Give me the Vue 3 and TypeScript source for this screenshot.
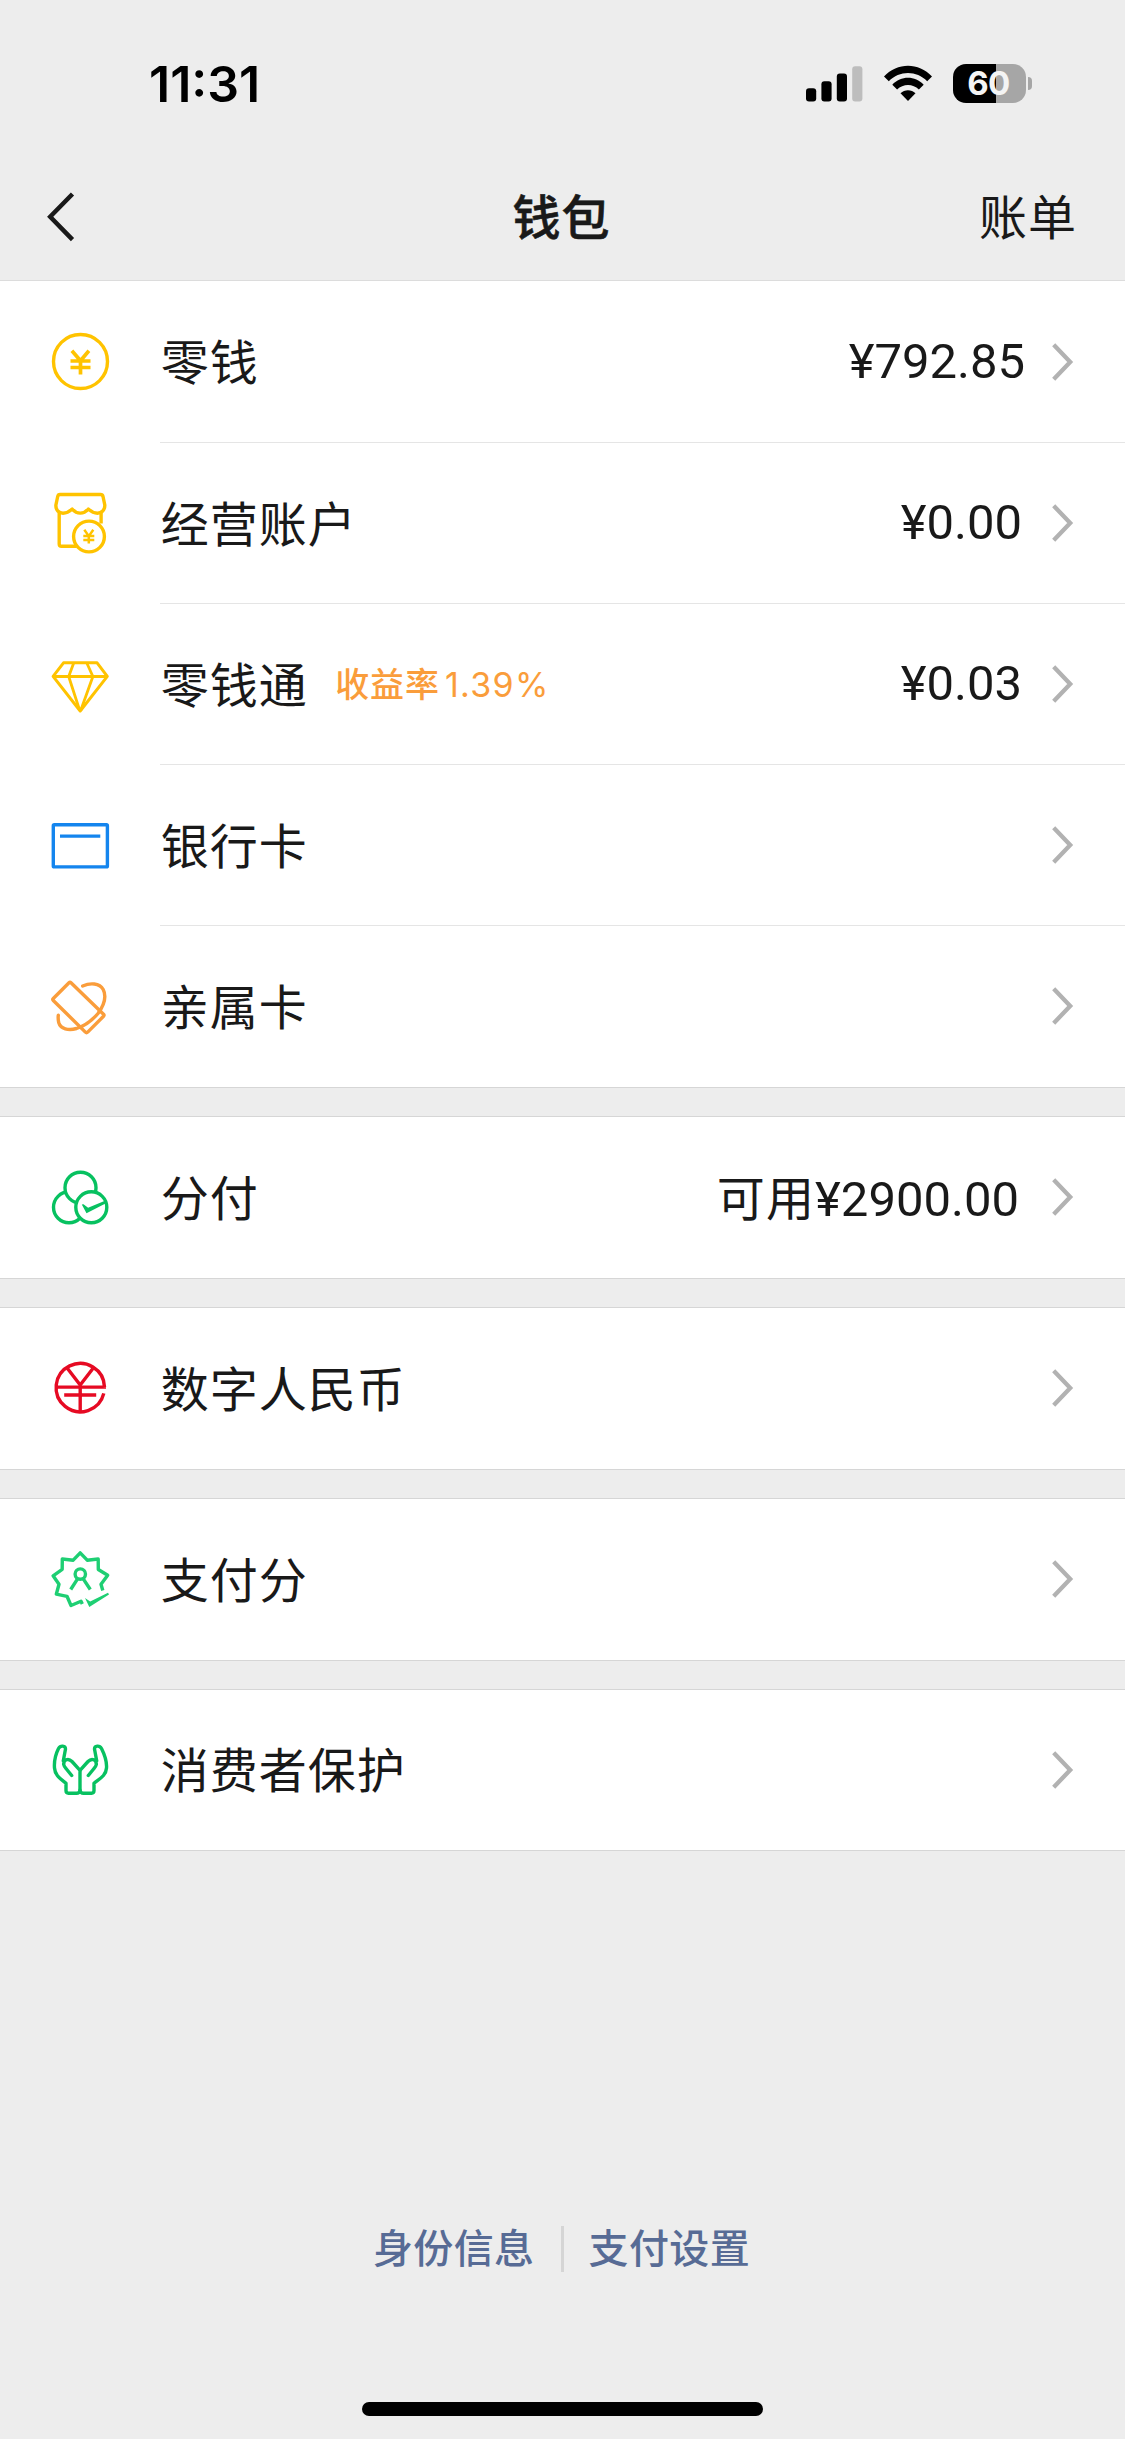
<script setup lang="ts">
type IconName = 'coin' | 'store' | 'diamond' | 'card' | 'kin' | 'installment' | 'ecny' | 'score' | 'hands'

interface WalletItem {
  label: string
  icon: IconName
  tag?: string
  prefix?: string
  amount?: string
  inset?: number
}

const groups: WalletItem[][] = [
  [
    { label: '零钱', icon: 'coin', amount: '¥792.85', inset: 0 },
    { label: '经营账户', icon: 'store', amount: '¥0.00', inset: 3 },
    { label: '零钱通', icon: 'diamond', tag: '收益率', amount: '¥0.03', inset: 3 },
    { label: '银行卡', icon: 'card' },
    { label: '亲属卡', icon: 'kin' },
  ],
  [{ label: '分付', icon: 'installment', prefix: '可用', amount: '¥2900.00', inset: 6 }],
  [{ label: '数字人民币', icon: 'ecny' }],
  [{ label: '支付分', icon: 'score' }],
  [{ label: '消费者保护', icon: 'hands' }],
]

const rate = '1.39%'
</script>

<template>
  <div class="screen">
    <header class="top">
      <div class="status">
        <span class="time">11:31</span>
        <div class="indicators">
          <svg class="signal" width="57" height="36" viewBox="0 0 57 36">
            <rect x="0" y="22.2" width="10.2" height="13.3" rx="3" />
            <rect x="15.4" y="15.2" width="10.2" height="20.3" rx="3" />
            <rect x="30.8" y="7.4" width="10.2" height="28.1" rx="3" />
            <rect x="46.2" y="0.2" width="10.2" height="35.3" rx="3" fill="#bdbdbd" />
          </svg>
          <svg class="wifi" width="50" height="37" viewBox="0 0 50 37">
            <path d="M1 11.4C14.3-2.8 35.7-2.8 49 11.4L44.2 16.3C33.6 5.2 16.4 5.2 5.800 16.300Z" />
            <path d="M9.300 19.700C18 10.500 32 10.500 40.700 19.700L35.900 24.600C29.900 18.400 20.100 18.400 14.100 24.600Z" />
            <path d="M17.500 28.200C21.700 24.200 28.300 24.200 32.500 28.200L25 36Z" />
          </svg>
          <div class="battery"><span>60</span></div>
          <i class="battery-cap"></i>
        </div>
      </div>
      <nav class="nav">
        <svg class="back" width="30" height="50" viewBox="0 0 30 50">
          <path d="M26.500 2L4.200 24.800L26.500 47.600" />
        </svg>
        <h1>钱包</h1>
        <a class="bill">账单</a>
      </nav>
    </header>

    <main>
      <section v-for="(group, g) in groups" :key="g" class="group">
        <div v-for="item in group" :key="item.label" class="row">
          <svg class="icon" :class="item.icon" viewBox="-36.500 -36.500 73 73" width="73" height="73">
            <template v-if="item.icon === 'coin'">
              <circle r="27" cx="0" cy="0" />
              <path stroke-width="3.700" d="M-8.600-10.800L0-.8L8.400-10.800M0-.8V13M-10-.5H10M-10 6H10" />
            </template>
            <template v-else-if="item.icon === 'store'">
              <path d="M-21.300-11V20.500Q-21.300 22.700-19 22.700H-4M20.600-11V0" />
              <path d="M-20.500-29H20Q22-29 22.500-27L24.300-18.500C24.500-13.500 21-10.300 17-10.300C13-10.300 10.500-12 7.800-14.400C3-9-3.500-9-8.300-14.400C-11-12-13.500-10.300-17.500-10.300C-21.500-10.300-25-13.500-24.600-18.500L-22.800-27Q-22.400-29-20.500-29Z" />
              <circle cx="8.500" cy="13" r="15.400" fill="#fff" />
              <path stroke-width="2.500" d="M3.800 6.200L8.300 12.600L12.800 6.200M8.300 12.600V20M2.800 12.500H13.800M2.800 16.400H13.800" />
            </template>
            <template v-else-if="item.icon === 'diamond'">
              <path stroke-width="3" d="M-17-21.700H16.600L26.800-8.200L-.3 26.500L-27.400-8.200Z" />
              <path stroke-width="2.800" d="M-27-8H26.500M-6.800-21.500L-11.800-8L-.8 26M6.300-21.500L12.400-8L.2 26" />
            </template>
            <template v-else-if="item.icon === 'card'">
              <rect x="-27.200" y="-20.700" width="54.100" height="42.100" rx="1" />
              <path d="M-20.500-9.400H19.800" />
            </template>
            <template v-else-if="item.icon === 'kin'">
              <path d="M-11.500-23.700Q-10.500-24.700-9.500-23.700L23 7.700Q24 8.800 23 9.800L7.200 25.600Q6 26.700 4.900 25.600L-27.200-6Q-28.200-7-27.200-8Z" />
              <path stroke-linecap="round" d="M2.200-20.500C9.500-23.800 19-23.700 22.700-17C26.500-9.500 22.500 0 17.500 7C11 14.500 3 19.800-4 22C-12 24.300-20 22.500-21.800 16C-22.400 13.500-22.500 11.500-22.200 8.800" />
            </template>
            <template v-else-if="item.icon === 'installment'">
              <circle cx="-11.500" cy="9.800" r="15.500" />
              <circle cx="0" cy="-9.800" r="15.500" fill="#fff" />
              <circle cx="10.800" cy="9.800" r="15.500" fill="#fff" />
              <path class="solid" d="M1.300 7L3 6.800L7.600 10.300L24.500 3.200L25.500 5.700L6 15.800Z" />
            </template>
            <template v-else-if="item.icon === 'ecny'">
              <path d="M25.500-1.400H-24.500M24-1.400A24.200 24.200 0 1 0 23.300 4.900" />
              <path d="M-13-20L-.3-3.500L12.400-20M-.3-3.500V24M-16.300 6.500H15.700" />
            </template>
            <template v-else-if="item.icon === 'score'">
              <path d="M22.300 11L20.500 4.700L27.200-4.200L17.800-10L17.700-20.500L6.700-19.300L-.3-26.700L-7.300-19.300L-18.200-20.500L-18.300-10.200L-27.400-3.700L-21.500 4.700L-24.200 14.700L-13.500 16.800L-9.500 26L.5 21.800L1.800 24.500" />
              <circle cx="-.2" cy="-5.400" r="5.200" />
              <path d="M-2.800-.9L-9.800 10M2.600-.9L9.800 10" />
              <path class="solid" d="M4.500 18.600L9.700 22L27.500 13.300L28.500 15L8.800 27.500Z" />
            </template>
            <template v-else>
              <path stroke-linecap="round" d="M-.5 .8V22.500M-.5 .8L-8.500-8C-12.500-12-17-9.500-16.800-5C-16.500-3.500-15.500-2-14.500-1L-8.800 6M-17.200-8.800L-15-20.500C-15-24-20-24.500-22-21C-25.500-14-26.500-8-26-1.500C-25.500 6.500-19.500 9.500-14.500 13.700V21C-14.500 22.800-13.500 23.700-12 23.700H-4C-2 23.700-.5 22.500-.5 20.500" />
              <path stroke-linecap="round" d="M-.5 .8L7.500-8C11.500-12 16-9.500 15.800-5C15.500-3.500 14.500-2 13.500-1L7.800 6M16.200-8.800L14-20.500C14-24 19-24.500 21-21C24.500-14 26.500-8 26-1.500C25.500 6.500 18.500 9.500 13.500 13.700V21C13.500 22.800 12.500 23.700 11 23.700H3C1 23.700-.5 22.500-.5 20.500" />
            </template>
          </svg>
          <span class="label">{{ item.label }}</span>
          <span v-if="item.tag" class="tag">{{ item.tag }}<b>{{ rate }}</b></span>
          <span v-if="item.amount" class="value" :style="{ marginRight: item.inset + 'px' }">
            <em v-if="item.prefix">{{ item.prefix }}</em>{{ item.amount }}
          </span>
          <svg class="chevron" width="24" height="40" viewBox="0 0 24 40">
            <path d="M2.700 2.800L19.200 20L2.700 37.200" />
          </svg>
        </div>
      </section>
    </main>

    <footer class="footer">
      <a>身份信息</a>
      <i class="divider"></i>
      <a>支付设置</a>
    </footer>
    <div class="home"></div>
  </div>
</template>

<style>
body {
  margin: 0;
  background: #ededed;
}
</style>

<style scoped>
.screen {
  width: 1125px;
  height: 2439px;
  display: flex;
  flex-direction: column;
  background: #ededed;
  color: #191919;
  font-family: "Noto Sans CJK SC", sans-serif;
  overflow: hidden;
}
.top {
  height: 281px;
  box-sizing: border-box;
  border-bottom: 1px solid #dcdcdc;
}
.status {
  height: 154px;
  display: flex;
  justify-content: space-between;
  padding: 0 93px 0 149px;
}
.time {
  margin-top: 54px;
  height: 60px;
  font: 600 50px/60px Inter, sans-serif;
  color: #000;
}
.indicators {
  display: flex;
  align-items: center;
  height: 39px;
  margin-top: 64px;
}
.wifi {
  margin: 0 20px;
}
.battery {
  width: 73px;
  height: 39px;
  border-radius: 13px;
  background: linear-gradient(90deg, #000 43px, #a6a6a6 43px);
  color: #f4f4f4;
  text-align: center;
  font: 700 33px/39px Inter, sans-serif;
  letter-spacing: -0.600px;
  text-indent: -2px;
}
.battery-cap {
  width: 4px;
  height: 13px;
  margin-left: 2px;
  border-radius: 0 5px 5px 0;
  background: #a6a6a6;
}
.nav {
  height: 126px;
  display: grid;
  grid-template-columns: 1fr auto 1fr;
  align-items: center;
  padding: 0 48px 0 46px;
}
.back,
.chevron {
  fill: none;
  stroke: #191919;
  stroke-width: 4.500;
}
h1,
.bill {
  margin: 0;
  padding-bottom: 6px;
  font-size: 48px;
  line-height: 72px;
  letter-spacing: 1px;
}
h1 {
  font-weight: 500;
  -webkit-text-stroke: 0.600px currentColor;
}
.bill {
  justify-self: end;
}
.group {
  background: #fff;
  border-bottom: 1px solid #d6d6d6;
}
.group + .group {
  margin-top: 28px;
  border-top: 1px solid #d6d6d6;
}
.row {
  height: 161px;
  display: flex;
  align-items: center;
  padding: 0 50px 1px 44px;
  box-sizing: border-box;
  background: linear-gradient(#e5e5e5, #e5e5e5) 160px 100% / 100% 1px no-repeat;
}
.row:first-child:not(:last-child) {
  height: 162px;
}
.row:last-child {
  background: none;
}
.group:last-child .row {
  height: 160px;
}
.icon {
  flex: none;
  fill: none;
  stroke: currentColor;
  stroke-width: 3.400;
  stroke-linejoin: round;
}
.coin,
.store,
.diamond {
  color: #ffc300;
}
.card {
  color: #1485ee;
}
.kin {
  color: #fa9d3b;
}
.installment,
.hands {
  color: #07c160;
}
.ecny {
  color: #e60a23;
}
.score {
  color: #1ecf73;
}
.solid {
  fill: currentColor;
  stroke: none;
}
.label {
  margin-left: 43.700px;
  padding-bottom: 5px;
  font-size: 48px;
  line-height: 72px;
  letter-spacing: 1px;
}
.tag {
  margin-left: 27.500px;
  padding-bottom: 1px;
  font-size: 34px;
  line-height: 50px;
  font-weight: 500;
  letter-spacing: 0.900px;
  color: #fa9d3b;
}
.tag b {
  margin-left: 5px;
  font-family: Inter, sans-serif;
  font-weight: 400;
  letter-spacing: 1.300px;
}
.value {
  margin-left: auto;
  display: flex;
  align-items: baseline;
  font: 400 49px/72px Roboto, "Noto Sans CJK SC", sans-serif;
}
.value em {
  font: 400 48px/72px "Noto Sans CJK SC", sans-serif;
  letter-spacing: 1.200px;
}
.chevron {
  margin-left: auto;
  stroke: #b2b2b2;
  stroke-width: 4.300;
}
.value + .chevron {
  margin-left: 26px;
}
.footer {
  margin-top: auto;
  display: flex;
  justify-content: center;
  align-items: center;
  padding: 0 2px 123px 0;
  color: #576b95;
  font-size: 40px;
  line-height: 56px;
  letter-spacing: 0.400px;
  font-weight: 500;
}
.footer a {
  padding-bottom: 5px;
}
.divider {
  width: 3px;
  height: 46px;
  margin: 0 25px 0 26px;
  background: #d5d5d5;
}
.home {
  width: 401px;
  height: 14px;
  margin: 0 auto 23px;
  border-radius: 7px;
  background: #000;
}
</style>
